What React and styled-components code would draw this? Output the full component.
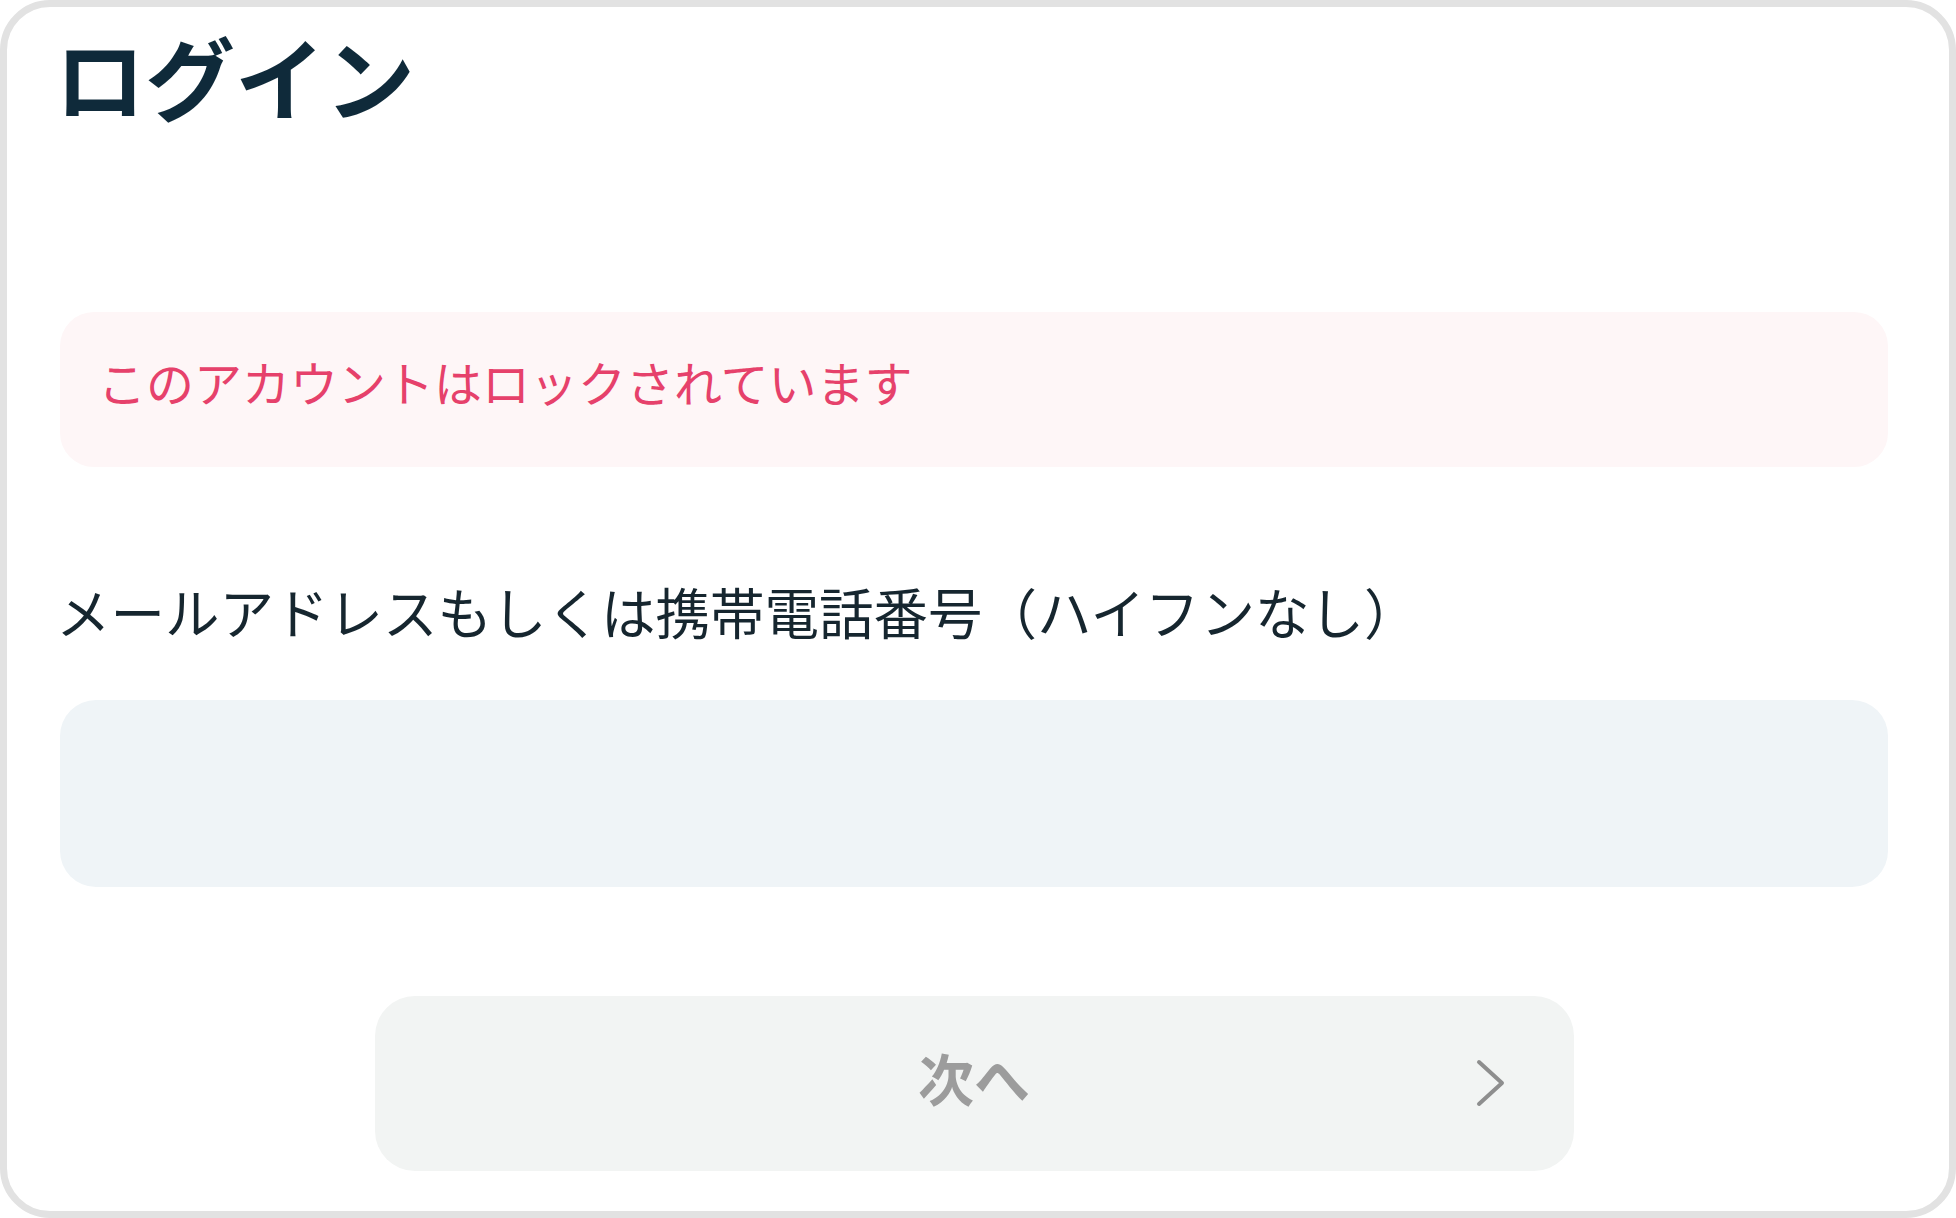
import React from "react";
import styled, { createGlobalStyle } from "styled-components";

const Global = createGlobalStyle`
  html, body { margin: 0; padding: 0; background: #ffffff; }
  body { font-family: "Noto Sans CJK JP", "Noto Sans", sans-serif; }
  * { box-sizing: border-box; }
`;

const Card = styled.main`
  width: 1956px;
  height: 1218px;
  border: 7px solid #e2e2e2;
  border-radius: 50px;
  background: #ffffff;
  padding: 18px 61px 0 53px;
  display: flex;
  flex-direction: column;
`;

const Title = styled.h1`
  margin: 0 0 0 -5px;
  font-size: 90px;
  line-height: 100px;
  font-weight: 700;
  color: #0f2a3a;
  letter-spacing: 0;
`;

const Alert = styled.div`
  margin-top: 187px;
  height: 155px;
  border-radius: 34px;
  background: #fef6f7;
  display: flex;
  align-items: center;
  padding: 0 40px 18px 38px;
  font-size: 48px;
  font-weight: 400;
  color: #e6416b;
`;

const Label = styled.label`
  display: block;
  margin: 109px 0 0 -4px;
  font-size: 54.5px;
  line-height: 70px;
  font-weight: 400;
  color: #16262f;
`;

const Input = styled.input`
  display: block;
  margin-top: 54px;
  width: 100%;
  height: 187px;
  border: none;
  outline: none;
  border-radius: 36px;
  background: #eff4f7;
  padding: 0 40px;
  font-size: 50px;
  font-family: inherit;
`;

const NextButton = styled.button`
  position: relative;
  margin: 109px auto 0;
  width: 1199px;
  height: 175px;
  border: none;
  border-radius: 40px;
  background: #f2f4f3;
  display: flex;
  align-items: center;
  justify-content: center;
  padding: 0 0 14px;
  font-family: inherit;
  font-size: 56px;
  font-weight: 700;
  color: #9c9c9c;
  cursor: default;
`;

const Chevron = styled.svg`
  position: absolute;
  right: 69px;
  top: 63px;
`;

export default function App() {
  return (
    <>
      <Global />
      <Card>
        <Title>ログイン</Title>
        <Alert>このアカウントはロックされています</Alert>
        <Label htmlFor="account">メールアドレスもしくは携帯電話番号（ハイフンなし）</Label>
        <Input id="account" type="text" />
        <NextButton disabled>
          次へ
          <Chevron width="29" height="48" viewBox="0 0 29 48" fill="none">
            <polyline
              points="3,3 26,24 3,45"
              stroke="#8e8e8e"
              strokeWidth="4"
              strokeLinecap="round"
              strokeLinejoin="round"
            />
          </Chevron>
        </NextButton>
      </Card>
    </>
  );
}
